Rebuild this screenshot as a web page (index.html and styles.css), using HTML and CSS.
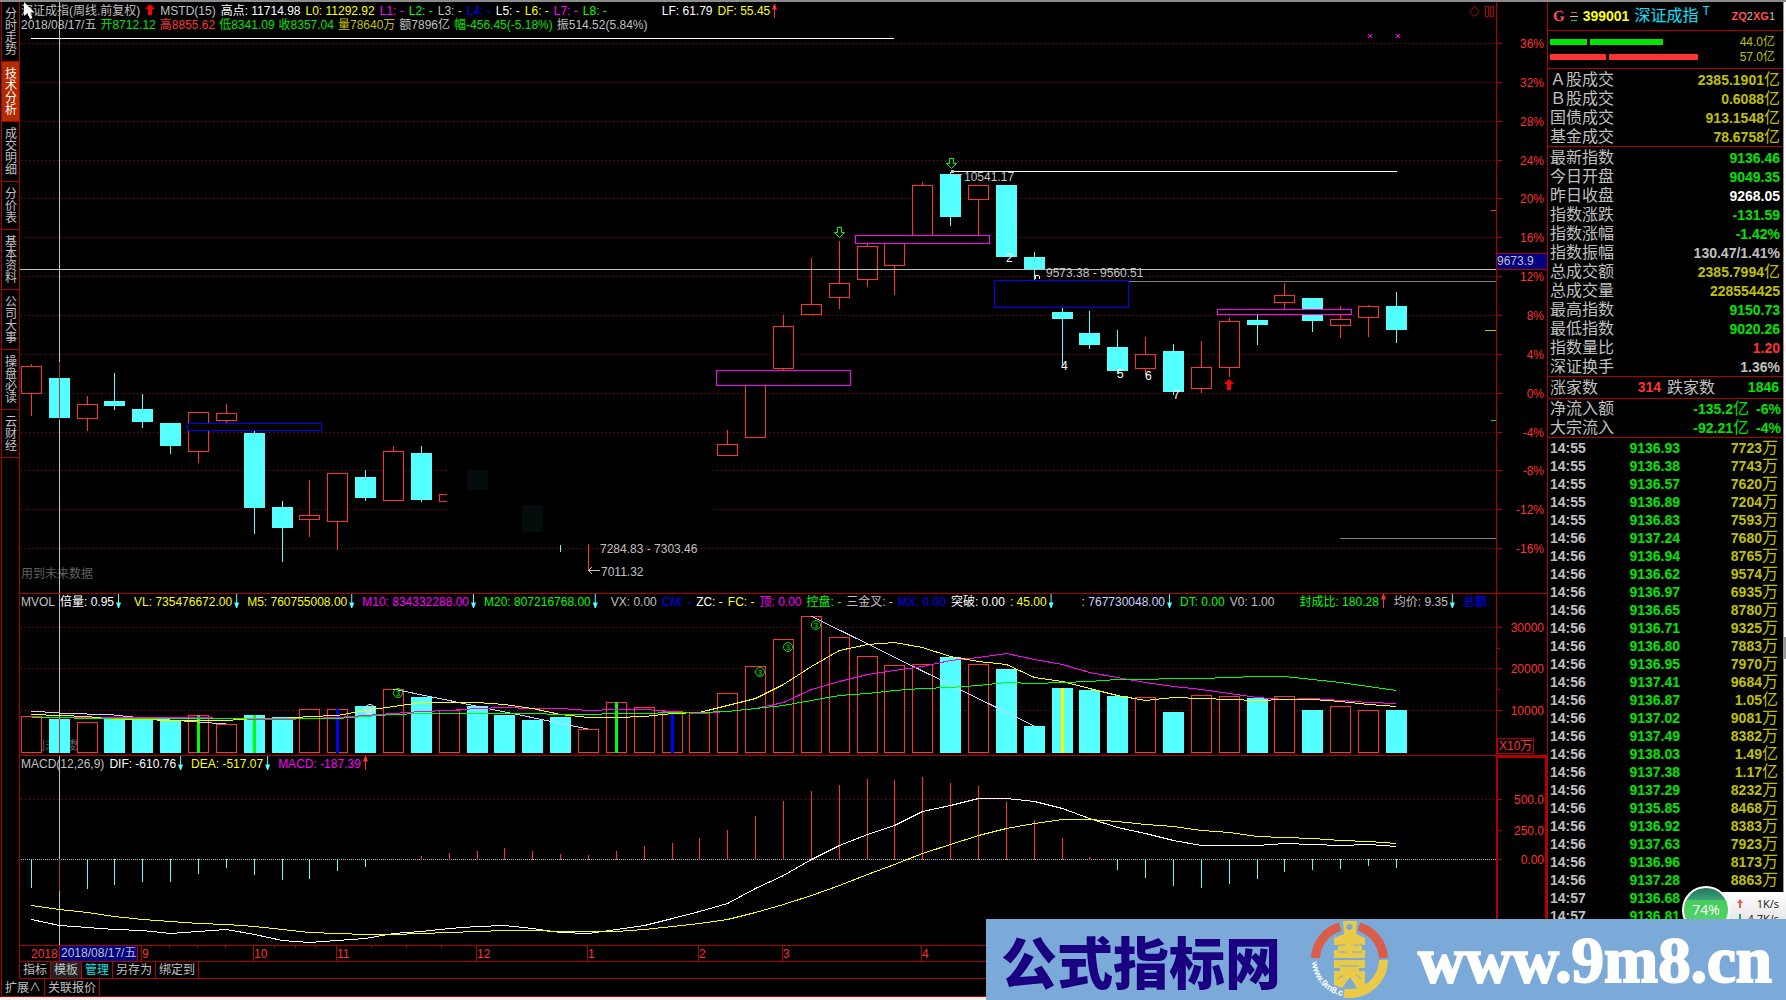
FILE: index.html
```html
<!DOCTYPE html>
<html lang="zh-CN">
<head>
    <meta charset="UTF-8">
    <meta name="viewport" content="width=device-width, initial-scale=1.0">
    <title>深证成指 技术分析</title>
    <link rel="stylesheet" href="styles.css">
</head>
<body>
    <div class="main">
        <div class="left">
            <div class="upper">
                <nav class="sidebar">
                    <button>分时走势</button>
                    <button class="active">技术分析</button>
                    <button>成交明细</button>
                    <button>分价表</button>
                    <button>基本资料</button>
                    <button>公司大事</button>
                    <button>操盘必读</button>
                    <button>云财经</button>
                </nav>
                <div class="charts">
                    <section class="panel price">
                        <div class="plot">
                            <svg id="price_plot"></svg>
                            <div class="legend">
                                <div class="line">
                                    <span class="gray">深证成指(周线.前复权)</span>
                                    <svg class="up-icon" width="10" height="11"><path d="M5 0 L10 5 H7 V11 H3 V5 H0 Z" fill="#f00"/></svg>
                                    <span class="gray">MSTD(15)</span>
                                    <span class="white">高点: 11714.98</span>
                                    <span class="yellow">L0: 11292.92</span>
                                    <span class="magenta">L1: -</span>
                                    <span class="lime">L2: -</span>
                                    <span class="gray">L3: -</span>
                                    <span class="blue">L4: -</span>
                                    <span class="white">L5: -</span>
                                    <span class="yellow">L6: -</span>
                                    <span class="magenta">L7: -</span>
                                    <span class="lime">L8: -</span>
                                    <span class="white far">LF: 61.79</span>
                                    <span class="yellow up">DF: 55.45</span>
                                </div>
                                <div class="line ohlc">
                                    <span class="gray">2018/08/17/五</span>
                                    <span class="green">开8712.12</span>
                                    <span class="red">高8855.62</span>
                                    <span class="green">低8341.09</span>
                                    <span class="green">收8357.04</span>
                                    <span class="gold">量78640万</span>
                                    <span class="gray">额7896亿</span>
                                    <span class="green">幅-456.45(-5.18%)</span>
                                    <span class="gray">振514.52(5.84%)</span>
                                </div>
                            </div>
                        </div>
                        <svg class="axis" id="price_axis"></svg>
                    </section>

                    <section class="panel volume">
                        <div class="plot">
                            <svg id="vol_plot"></svg>
                            <div class="legend">
                                <div class="line">
                                    <span class="gray">MVOL</span>
                                    <span class="white down">倍量: 0.95</span>
                                    <span class="yellow down near">VL: 735476672.00</span>
                                    <span class="yellow down">M5: 760755008.00</span>
                                    <span class="magenta down">M10: 834332288.00</span>
                                    <span class="lime down">M20: 807216768.00</span>
                                    <span class="gray near">VX: 0.00</span>
                                    <span class="blue">CM: -</span>
                                    <span class="white">ZC: -</span>
                                    <span class="yellow">FC: -</span>
                                    <span class="magenta">顶: 0.00</span>
                                    <span class="lime">控盘: -</span>
                                    <span class="gray">三金叉: -</span>
                                    <span class="blue">MX: 0.00</span>
                                    <span class="white">突破: 0.00</span>
                                    <span class="yellow down">: 45.00</span>
                                    <span class="lavender down mid">: 767730048.00</span>
                                    <span class="lime">DT: 0.00</span>
                                    <span class="gray">V0: 1.00</span>
                                    <span class="lime up mid">封成比: 180.28</span>
                                    <span class="gray down">均价: 9.35</span>
                                    <span class="blue">总额:</span>
                                </div>
                            </div>
                        </div>
                        <svg class="axis" id="vol_axis"></svg>
                    </section>

                    <section class="panel macd">
                        <div class="plot">
                            <svg id="macd_plot"></svg>
                            <div class="legend">
                                <div class="line">
                                    <span class="gray">MACD(12,26,9)</span>
                                    <span class="white down">DIF: -610.76</span>
                                    <span class="yellow down">DEA: -517.07</span>
                                    <span class="magenta up">MACD: -187.39</span>
                                </div>
                            </div>
                        </div>
                        <svg class="axis selected" id="macd_axis"></svg>
                    </section>

                    <svg class="dates" id="dates"></svg>

                    <div class="tabs">
                        <button>指标</button>
                        <button class="on">模板</button>
                        <button class="manage">管理</button>
                        <button>另存为</button>
                        <button>绑定到</button>
                    </div>
                </div>
            </div>
            <div class="tabs bottom">
                <button>扩展∧</button>
                <button>关联报价</button>
            </div>
        </div>

        <aside class="quote">
            <header>
                <b class="g">G</b>
                <svg width="8" height="11"><path d="M1 1.5H7" stroke="#ff5050"/><path d="M0 5.5H8" stroke="#c0c0c0"/><path d="M1 9.5H7" stroke="#00e600"/></svg>
                <b class="code">399001</b>
                <span class="name">深证成指<sup>T</sup></span>
                <span class="tag"><b>ZQ</b>2<b>XG</b>1</span>
            </header>
            <div class="bars">
                <div class="bar sell"><i class="a"></i><i class="b"></i><span>44.0亿</span></div>
                <div class="bar buy"><i class="a"></i><i class="b"></i><span>57.0亿</span></div>
            </div>
            <table>
                <tr><th>Ａ股成交</th><td class="gold">2385.1901<i>亿</i></td></tr>
                <tr><th>Ｂ股成交</th><td class="gold">0.6088<i>亿</i></td></tr>
                <tr><th>国债成交</th><td class="gold">913.1548<i>亿</i></td></tr>
                <tr><th>基金成交</th><td class="gold">78.6758<i>亿</i></td></tr>
            </table>
            <table>
                <tr><th>最新指数</th><td class="green">9136.46</td></tr>
                <tr><th>今日开盘</th><td class="green">9049.35</td></tr>
                <tr><th>昨日收盘</th><td class="white">9268.05</td></tr>
                <tr><th>指数涨跌</th><td class="green">-131.59</td></tr>
                <tr><th>指数涨幅</th><td class="green">-1.42%</td></tr>
                <tr><th>指数振幅</th><td class="gray">130.47/1.41%</td></tr>
                <tr><th>总成交额</th><td class="gold">2385.7994<i>亿</i></td></tr>
                <tr><th>总成交量</th><td class="gold">228554425</td></tr>
                <tr><th>最高指数</th><td class="green">9150.73</td></tr>
                <tr><th>最低指数</th><td class="green">9020.26</td></tr>
                <tr><th>指数量比</th><td class="red">1.20</td></tr>
                <tr><th>深证换手</th><td class="gray">1.36%</td></tr>
            </table>
            <div class="count">
                <span>涨家数</span><b class="red">314</b><span>跌家数</span><b class="green">1846</b>
            </div>
            <table class="flow">
                <tr><th>净流入额</th><td class="green">-135.2<i>亿</i></td><td class="green pct">-6%</td></tr>
                <tr><th>大宗流入</th><td class="green">-92.21<i>亿</i></td><td class="green pct">-4%</td></tr>
            </table>
            <div class="ticks">
                <table id="ticks"></table>
            </div>
        </aside>
        <div class="scroll"><div class="thumb"></div></div>
    </div>

    <svg class="cursor" width="13" height="18"><path d="M1 0 V14 L4.500 11 L7 17 L9.500 16 L7 10.500 H11.500 Z" fill="#fff"/></svg>

    <!-- 网速悬浮球 -->
    <div class="speed">
        <div class="ball">74%</div>
        <div class="rates">
            <p><svg width="6" height="9"><path d="M3 0L6 4H4V9H2V4H0Z" fill="#e8604a"/></svg>1K/s</p>
            <p><svg width="6" height="9"><path d="M3 9L6 5H4V0H2V5H0Z" fill="#2ca05a"/></svg>4.7K/s</p>
        </div>
    </div>

    <div class="banner">
        <span class="cn">公式指标网</span>
        <svg width="77" height="77" viewBox="0 0 77 77">
            <path d="M4.500 37 A34 34 0 0 1 29 5.800" fill="none" stroke="#d95d48" stroke-width="9"/>
            <path d="M48 5.800 A34 34 0 0 1 72.500 37" fill="none" stroke="#d95d48" stroke-width="9"/>
            <path d="M72.500 39 A34 34 0 0 1 33 72.100" fill="none" stroke="#e9cb49" stroke-width="9"/>
            <path d="M32 0H46L45 13L54 17V24H51V29H54V37H23V29H27V24H23V17L33 13Z" fill="#e9cb49"/>
            <path d="M23 39H54V47H48V50H54V66L46 67L39 56L31 67L23 64V50H29V47H23Z" fill="#e9cb49"/>
            <path d="M27 24H35M42 24H51M27 31H36M41 31H51M29 45H48M32 54L27 58M45 54L50 58" stroke="#7ba9d8" stroke-width="1"/>
            <circle cx="38.500" cy="6" r="3" fill="#7ba9d8"/>
            <path id="ring" d="M1 41 A37 37 0 0 0 32 75" fill="none"/>
            <text font-size="9" font-weight="bold" fill="#fff"><textPath href="#ring">www.9m8.cn</textPath></text>
        </svg>
        <span class="url">www.9m8.cn</span>
    </div>

    <script src="script.js"></script>
</body>
</html>
```
FILE: styles.css
```css
* {
    box-sizing: border-box;
}

body {
    margin: 0;
    height: 100vh;
    overflow: hidden;
    position: relative;
    background: #f4f0f0;
    border-top: 2px solid #8c8c8c;
    font: 12px/14px "Liberation Sans", "Noto Sans CJK SC", sans-serif;
    color: #c0c0c0;
}

button {
    margin: 0;
    padding: 0;
    border: 0;
    background: none;
    color: inherit;
    font: inherit;
    cursor: pointer;
}

.white { color: #fff; }
.gray { color: #c0c0c0; }
.yellow { color: #ff0; }
.gold { color: #c0c000; }
.magenta { color: #f0f; }
.lime { color: #0f0; }
.green { color: #00e600; }
.red { color: #ff3232; }
.blue { color: #00f; }
.lavender { color: #d0d0ff; }

.main {
    display: flex;
    height: 100%;
}

.left {
    flex: 1;
    min-width: 0;
    padding-left: 1px;
    background: #000;
    display: flex;
    flex-direction: column;
    border-bottom: 3px solid #f4f0f0;
}

.upper {
    flex: 1;
    min-height: 0;
    display: flex;
}

/* 左侧竖排菜单 */
.sidebar {
    width: 19px;
    border-left: 1px solid #b00000;
    border-right: 1px solid #b00000;
}

.sidebar button {
    display: block;
    width: 100%;
    padding: 6px 2px 5px 3px;
    border-bottom: 1px solid #b00000;
    line-height: 12px;
    word-break: break-all;
}

.sidebar button.active {
    background: #b32c00;
    color: #fff;
}

.charts {
    flex: 1;
    min-width: 0;
    display: flex;
    flex-direction: column;
}

.panel {
    display: flex;
    border-bottom: 1px solid #b00000;
}

.price {
    flex: 1;
    min-height: 0;
}

.volume {
    height: 162px;
}

.macd {
    height: 190px;
}

.plot {
    flex: 1;
    min-width: 0;
    display: grid;
    overflow: hidden;
}

.plot > * {
    grid-area: 1 / 1;
    min-width: 0;
}

.plot svg {
    width: 100%;
    height: 100%;
}

.axis {
    width: 51px;
    height: 100%;
    border-left: 1px solid #b00000;
}

.axis.selected {
    border: 2px solid #b00000;
    border-bottom: 0;
}

svg {
    display: block;
    flex: none;
}

svg text {
    font: 12px "Liberation Sans", "Noto Sans CJK SC", sans-serif;
}

.banner svg text {
    font: bold 9px "Liberation Sans", sans-serif;
}

.legend {
    padding: 0 1px;
    z-index: 1;
}

.price .legend {
    padding-top: 2px;
}

.line {
    display: flex;
    gap: 5px;
    white-space: nowrap;
}

.ohlc {
    gap: 4px;
}

.volume .line,
.macd .line {
    line-height: 16px;
}

.legend .up-icon {
    width: 10px;
    height: 11px;
}

.line .near { margin-left: 5px; }
.line .mid { margin-left: 20px; }
.line .far { margin-left: 50px; }

/* 数值后的升降箭头 */
.up::after,
.down::after {
    content: "";
    display: inline-block;
    width: 5px;
    height: 14px;
    margin: 0 3px 0 2px;
    vertical-align: top;
    background: #54ffff;
    clip-path: polygon(40% 0, 60% 0, 60% 60%, 100% 60%, 60% 100%, 40% 100%, 0 60%, 40% 60%);
}

.up::after {
    background: #ff3232;
    transform: rotate(180deg);
}

.dates {
    width: 100%;
    height: 16px;
    border-bottom: 1px solid #b00000;
}

.tabs {
    display: flex;
    height: 17px;
    border-bottom: 1px solid #b00000;
}

.tabs button {
    padding: 0 3px;
    line-height: 16px;
    border-right: 1px solid #b00000;
}

.tabs .on {
    background: #222;
}

.tabs .manage {
    color: #00e6e6;
}

.bottom {
    height: 18px;
    border-left: 1px solid #b00000;
}

/* 右侧行情 */
.quote {
    width: 236px;
    background: #000;
    border-left: 1px solid #b00000;
    display: flex;
    flex-direction: column;
}

.quote > * {
    border-bottom: 1px solid #b00000;
}

.quote header {
    height: 29px;
    padding: 0 8px 0 5px;
    display: flex;
    align-items: center;
    gap: 5px;
}

.quote .g {
    color: #ff5050;
    font: bold 15px "Liberation Serif", serif;
}

.quote .code {
    color: #ff0;
    font-size: 14px;
}

.quote .name {
    color: #00e6ff;
    font-size: 16px;
}

.quote .name sup {
    font-size: 12px;
    line-height: 0;
    margin-left: 4px;
}

.quote .tag {
    margin-left: auto;
    font-size: 11px;
}

.quote .tag b {
    color: #ff5050;
}

.bars {
    height: 38px;
    padding: 3px 8px 0 2px;
}

.bar {
    display: flex;
    align-items: center;
    gap: 3px;
    height: 15px;
    color: #c0c000;
}

.bar i {
    height: 6px;
    background: #00e600;
}

.bar.buy i {
    background: #ff3232;
}

.bar span {
    margin-left: auto;
}

.sell .a { width: 37px; }
.sell .b { width: 73px; }
.buy .a { width: 56px; }
.buy .b { width: 89px; }

table {
    border-collapse: collapse;
}

.quote > table {
    display: block;
    padding: 1px 3px 0 2px;
}

.quote > table tbody {
    display: table;
    width: 100%;
}

th,
td {
    padding: 0;
    height: 19px;
    line-height: 18px;
}

th {
    font-weight: normal;
    font-size: 16px;
    text-align: left;
    white-space: nowrap;
}

td {
    font-size: 14px;
    font-weight: bold;
    text-align: right;
}

td i {
    font-style: normal;
    font-weight: normal;
    font-size: 16px;
    line-height: 1px;
}

.quote > .flow {
    padding: 0 2px;
}

.flow .pct {
    width: 32px;
}

.count {
    display: flex;
    height: 22px;
    padding: 0 4px 0 2px;
    line-height: 21px;
    font-size: 16px;
}

.count b {
    width: 69px;
    padding-right: 6px;
    font-size: 14px;
    text-align: right;
}

.count b:last-child {
    flex: 1;
    padding: 0;
}

.quote > .ticks {
    flex: 1;
    min-height: 0;
    overflow: hidden;
    padding: 1px 5px 0 2px;
    border-bottom: 0;
}

.ticks table {
    width: 100%;
    table-layout: fixed;
}

.ticks td {
    height: 18px;
    line-height: 18px;
}

.ticks td:first-child {
    width: 61px;
    text-align: left;
    color: #c0c0c0;
}

.ticks td:nth-child(2) {
    width: 69px;
}

.scroll {
    width: 3px;
    background: #fff;
    border-left: 1px solid #999;
}

.thumb {
    height: 22px;
    margin-top: 635px;
    background: #999;
}

.cursor {
    position: absolute;
    left: 23px;
    top: 0;
    z-index: 3;
}

/* 悬浮球 */
.speed {
    position: absolute;
    right: 0;
    bottom: 66px;
    width: 104px;
    height: 48px;
    display: flex;
    align-items: center;
}

.ball {
    width: 48px;
    height: 48px;
    border: 2px solid #fff;
    border-radius: 50%;
    background: linear-gradient(#1c7a56 0, #3f9c7c 26%, #44cc58 27%, #5ad873 100%);
    color: #fff;
    font: 14px/44px "Open Sans", sans-serif;
    text-align: center;
    z-index: 1;
}

.rates {
    flex: 1;
    margin-left: -24px;
    height: 36px;
    padding: 4px 7px 0 31px;
    background: linear-gradient(#fff, #e0e0e0);
    color: #111;
    font: 11px/15px "Open Sans", sans-serif;
}

.rates p {
    margin: 0;
    display: flex;
    align-items: center;
    justify-content: space-between;
}

.banner {
    position: absolute;
    right: 0;
    bottom: 0;
    z-index: 2;
    width: 800px;
    height: 81px;
    padding: 0 14px 0 15px;
    display: flex;
    align-items: center;
    justify-content: space-between;
    background: #7ba9d8;
    white-space: nowrap;
}

.banner .cn {
    color: #1a0080;
    font: 900 56px/80px "Noto Sans CJK SC", sans-serif;
}

.banner .url {
    color: #fff;
    font: bold 65px/70px "Liberation Serif", serif;
    -webkit-text-stroke: 2px #fff;
}
```
FILE: script.js
```js
var NS = "http://www.w3.org/2000/svg";
var RED = "#ff3232", CYAN = "#54ffff", DARK = "#b00000";

// 每个图的原点，坐标统一按窗口计算
function layer(id, ox, oy) {
    var g = document.createElementNS(NS, "g");
    g.setAttribute("transform", "translate(" + -ox + "," + -oy + ")");
    document.getElementById(id).appendChild(g);
    return g;
}

function add(g, tag, attrs) {
    var el = document.createElementNS(NS, tag);
    for (var k in attrs) el.setAttribute(k, attrs[k]);
    g.appendChild(el);
    return el;
}

function fill(g, x1, y1, x2, y2, color) {
    add(g, "rect", { x: x1, y: y1, width: x2 - x1, height: y2 - y1, fill: color, "shape-rendering": "crispEdges" });
}

function box(g, x1, y1, x2, y2, color) {
    add(g, "rect", { x: x1 + 0.5, y: y1 + 0.5, width: x2 - x1 - 1, height: y2 - y1 - 1, fill: "#000", stroke: color });
}

function text(g, x, y, s, color, anchor) {
    add(g, "text", { x: x, y: y, fill: color, "text-anchor": anchor || "start" }).textContent = s;
}

function dots(g, y, color, step) {
    add(g, "line", { x1: 21, y1: y + 0.5, x2: "110%", y2: y + 0.5, stroke: color, "stroke-dasharray": "1 " + (step - 1), "shape-rendering": "crispEdges" });
}

function cx(i) {
    return Math.floor(31.3 + 27.857 * i);
}

function curve(g, ys, color) {
    var pts = ys.map(function (y, i) { return (cx(i) + 0.5) + "," + (y + 0.5); });
    add(g, "polyline", { points: pts.join(" "), fill: "none", stroke: color, "shape-rendering": "crispEdges" });
}

function seg(g, pts, color) {
    add(g, "polyline", { points: pts, fill: "none", stroke: color, "shape-rendering": "crispEdges" });
}

// K线: [序号, 涨(1)/跌(0), 最高, 实体上, 实体下, 最低]
var candles = [
    [0,1,364,366,394,416],[1,0,378,378,418,418],[2,1,396,404,419,431],[3,0,373,401,406,410],
    [4,0,394,409,422,428],[5,0,423,423,446,454],[6,1,412,412,452,463],[7,1,404,413,421,423],
    [8,0,431,433,508,534],[9,0,501,507,528,562],[10,1,480,515,520,537],[11,1,473,473,522,550],
    [12,0,470,477,498,501],[13,1,446,451,501,501],[14,0,446,453,500,502],
    [25,1,430,444,456,456],[26,1,385,384,438,438],[27,1,315,326,369,370],[28,1,258,304,315,315],
    [29,1,241,283,298,309],[30,1,243,246,280,287],[31,1,243,243,266,295],[32,1,182,185,236,236],
    [33,0,172,174,217,226],[34,1,185,185,200,236],[35,0,185,185,257,257],[36,0,252,257,269,280],
    [37,0,308,312,319,366],[38,0,311,333,345,349],[39,0,330,347,371,374],[40,1,337,354,369,375],
    [41,0,344,351,392,395],[42,1,341,367,389,393],[43,1,318,321,368,377],[44,0,315,320,325,345],
    [45,1,283,295,303,309],[46,0,298,298,321,332],[47,1,306,319,326,338],[48,1,305,306,318,337],
    [49,0,292,306,330,343]
];

var g = layer("price_plot", 20, 2);
var a = layer("price_axis", 1497, 2);
for (var n = 0; n < 14; n++) {
    var gy = Math.round(43 + n * 38.85);
    dots(g, gy, DARK, 4);
    fill(a, 1497, gy, 1502, gy + 1, DARK);
    text(a, 1544, gy + 5, (36 - n * 4) + "%", RED, "end");
}
fill(a, 1497, 253, 1548, 270, DARK);
fill(a, 1497, 254, 1548, 269, "#000080");
text(a, 1497, 265, "9673.9", "#c0c0c0");

text(g, 21, 578, "用到未来数据", "#606060");
fill(g, 31, 38, 894, 39, "#fff");
fill(g, 951, 171, 1397, 172, "#fff");
fill(g, 1129, 281, 1496, 282, "#808080");
fill(g, 1340, 538, 1496, 539, "#808080");

// 遮住的区间
fill(g, 447, 440, 712, 544, "#000");
fill(g, 467, 470, 488, 490, "#040c0c");
fill(g, 522, 505, 543, 532, "#040c0c");

candles.forEach(function (c) {
    var x = cx(c[0]), color = c[1] ? RED : CYAN;
    fill(g, x, c[2], x + 1, c[5], color);
    if (c[1]) box(g, x - 10, c[3], x + 11, c[4], color);
    else fill(g, x - 10, c[3], x + 11, c[4], color);
});
seg(g, "447,494.5 439.5,494.5 439.5,501.5 447,501.5", RED);
fill(g, 560, 545, 561, 552, CYAN);
fill(g, 588, 544, 589, 570, RED);

box(g, 187, 423, 322, 431, "#00f");
box(g, 716, 370, 851, 386, "#f0f");
box(g, 855, 235, 990, 244, "#f0f");
box(g, 994, 280, 1129, 308, "#00f");
box(g, 1217, 309, 1352, 315, "#f0f");

// 买卖点箭头
[[839, 227], [951, 158]].forEach(function (p) {
    add(g, "path", { d: "M" + (p[0] - 1.5) + " " + (p[1] + 0.5) + "h4v5h3l-5 5l-5 -5h3z", fill: "#000", stroke: "#0f0" });
});
add(g, "path", { d: "M1229 379l5 5h-3v6h-4v-6h-3z", fill: "#f00" });

fill(g, 20, 269, 1496, 270, "#c0c0c0");
fill(g, 59, 2, 60, 594, "#c0c0c0");
fill(g, 59, 362, 60, 420, "#a04040");

[["2", 1006, 262], ["4", 1061, 370], ["5", 1117, 378], ["6", 1145, 380], ["7", 1173, 399]].forEach(function (t) {
    text(g, t[1], t[2], t[0], "#fff");
});
seg(g, "1035,275.5 1039,275.5 1039.5,279", "#fff");
seg(g, "1035.5,279 1035.5,276", "#fff");
fill(g, 951, 170, 954, 173, "#c0c0c0");
fill(g, 952, 174, 962, 175, "#c0c0c0");
text(g, 964, 181, "10541.17", "#c0c0c0");
text(g, 1046, 277, "9573.38 - 9560.51", "#c0c0c0");
text(g, 600, 553, "7284.83 - 7303.46", "#c0c0c0");
seg(g, "600,570.5 588,570.5", "#c0c0c0");
seg(g, "592,567 588.5,570.5 592,574", "#c0c0c0");
text(g, 601, 576, "7011.32", "#c0c0c0");
fill(g, 1491, 210, 1496, 211, RED);
fill(g, 1485, 330, 1496, 331, "#c0c000");
fill(g, 1491, 420, 1496, 421, "#00e600");

[1370, 1398].forEach(function (x) {
    add(g, "path", { d: "M" + (x - 2) + " 34l4 4m0 -4l-4 4", stroke: "#f0f" });
});
add(g, "path", { d: "M1474.5 6.500l5 5l-5 5l-5 -5z", fill: "none", stroke: DARK });
box(g, 1485, 6, 1489, 17, DARK);
box(g, 1490, 6, 1494, 17, DARK);

// 成交量
g = layer("vol_plot", 20, 594);
a = layer("vol_axis", 1497, 594);
[[627, "30000"], [668, "20000"], [710, "10000"]].forEach(function (r) {
    dots(g, r[0], DARK, 4);
    fill(a, 1497, r[0], 1502, r[0] + 1, DARK);
    text(a, 1544, r[0] + 5, r[1], RED, "end");
});
fill(a, 1497, 648, 1500, 649, DARK);
fill(a, 1497, 689, 1500, 690, DARK);
box(a, 1497, 738, 1534, 754, DARK);
text(a, 1499, 750, "X10万", RED);

text(g, 21, 750, "用到未来数据", "#606060");
var vols = [716,719,722,719,719,720,715,724,715,717,709,709,706,689,697,710,706,715,720,717,729,702,707,711,713,
    693,666,639,616,637,656,665,664,657,664,669,726,688,690,696,697,712,695,696,698,696,710,706,710,710];
var falls = [1,3,4,5,8,9,12,14,16,17,18,19,33,35,36,37,38,39,41,44,46,49];
var stripes = { 6: "#0f0", 8: "#0f0", 21: "#0f0", 11: "#00f", 23: "#00f", 37: "#ff0" };
vols.forEach(function (y, i) {
    var x = cx(i);
    if (falls.indexOf(i) >= 0) fill(g, x - 10, y, x + 11, 753, CYAN);
    else box(g, x - 10, y, x + 11, 753, RED);
    if (stripes[i]) fill(g, x - 1, y, x + 2, 753, stripes[i]);
});
fill(g, 59, 594, 60, 719, "#c0c0c0");
fill(g, 59, 719, 60, 753, "#a04040");

seg(g, "31,711 59,713 114,715 142,718 170,720 198,722 226,724", "#d0d0ff");
seg(g, "393,689 588,729", "#d0d0ff");
seg(g, "811,616 1034,726", "#d0d0ff");
curve(g, [717,717,717,717,717,717,717,718,719,719,718,717,715,713,711,710,708,707,708,708,710,709,709,711,713,
    711,708,702,689,681,674,670,666,660,657,653,659,664,672,677,682,686,689,693,697,699,698,700,702,703], "#f0f");
curve(g, [714,715,716,719,719,720,720,720,718,718,716,715,710,706,702,702,702,704,708,714,717,717,716,713,712,
    705,698,684,666,650,644,642,647,656,661,664,677,681,688,695,700,697,698,699,700,699,699,701,704,706], "#ff0");
curve(g, [717,717,718,718,718,718,718,718,718,718,718,718,716,714,713,713,713,713,713,714,714,713,713,712,712,
    711,708,705,700,695,693,690,688,687,685,682,683,682,681,679,679,678,678,677,676,676,679,682,686,690], "#0f0");
[[398, 693, "3"], [760, 672, "3"], [788, 647, "3"], [816, 625, "3"], [370, 709, "1"]].forEach(function (m) {
    var color = m[2] == "3" ? "#00e600" : "#fff";
    add(g, "circle", { cx: m[0], cy: m[1], r: 4.5, fill: "none", stroke: color });
    add(g, "text", { x: m[0], y: m[1] + 3, fill: color, "text-anchor": "middle", style: "font-size:8px" }).textContent = m[2];
});

// MACD
g = layer("macd_plot", 20, 756);
a = layer("macd_axis", 1498, 758);
dots(g, 799, DARK, 4);
dots(g, 859, "#c0c0c0", 2);
[[799, "500.0"], [830, "250.0"], [859, "0.00"]].forEach(function (r) {
    fill(a, 1497, r[0], 1502, r[0] + 1, DARK);
    text(a, 1544, r[0] + 5, r[1], RED, "end");
});
[888,891,889,885,882,882,874,868,875,880,879,871,867,860,856,853,851,848,851,854,855,851,846,843,838,
    830,816,801,791,785,779,780,777,783,786,802,820,838,857,870,878,886,888,884,879,872,870,869,866,868].forEach(function (y, i) {
    var x = cx(i);
    if (y > 859) fill(g, x, 859, x + 1, y, CYAN);
    else fill(g, x, y, x + 1, 860, RED);
});
fill(g, 59, 756, 60, 946, "#c0c0c0");
fill(g, 59, 859, 60, 891, "#a04040");
curve(g, [919,925,927,929,930,933,931,929,934,940,942,940,938,933,931,928,926,925,928,932,933,929,925,918,911,
    903,888,875,859,845,834,825,811,805,798,798,801,808,818,827,833,840,845,845,845,843,844,845,844,846], "#fff");
curve(g, [905,909,912,916,919,921,923,924,926,929,932,933,934,934,933,932,931,930,930,931,931,931,929,926,923,
    919,912,904,895,885,874,864,853,844,835,828,823,819,819,821,824,826,830,832,836,837,838,840,841,843], "#ff0");

// 时间轴
g = layer("dates", 20, 946);
text(g, 31, 958, "2018", RED);
[[142, "9"], [254, "10"], [337, "11"], [477, "12"], [588, "1"], [699, "2"], [783, "3"], [922, "4"]].forEach(function (m) {
    fill(g, m[0] - 1, 946, m[0], 962, DARK);
    text(g, m[0], 958, m[1], RED);
});
[169, 197, 225, 274, 295, 315, 371, 406, 441].forEach(function (x) {
    fill(g, x, 946, x + 1, 948, DARK);
});
fill(g, 59, 946, 138, 961, DARK);
fill(g, 60, 946, 137, 961, "#000080");
text(g, 61, 957, "2018/08/17/五", "#c0c0c0");

// 分时成交
var ticks = [
    ["14:55", "9136.93", "7723万"], ["14:55", "9136.38", "7743万"], ["14:55", "9136.57", "7620万"],
    ["14:55", "9136.89", "7204万"], ["14:55", "9136.83", "7593万"], ["14:56", "9137.24", "7680万"],
    ["14:56", "9136.94", "8765万"], ["14:56", "9136.62", "9574万"], ["14:56", "9136.97", "6935万"],
    ["14:56", "9136.65", "8780万"], ["14:56", "9136.71", "9325万"], ["14:56", "9136.80", "7883万"],
    ["14:56", "9136.95", "7970万"], ["14:56", "9137.41", "9684万"], ["14:56", "9136.87", "1.05亿"],
    ["14:56", "9137.02", "9081万"], ["14:56", "9137.49", "8382万"], ["14:56", "9138.03", "1.49亿"],
    ["14:56", "9137.38", "1.17亿"], ["14:56", "9137.29", "8232万"], ["14:56", "9135.85", "8468万"],
    ["14:56", "9136.92", "8383万"], ["14:56", "9137.63", "7923万"], ["14:56", "9136.96", "8173万"],
    ["14:56", "9137.28", "8863万"], ["14:57", "9136.68", ""], ["14:57", "9136.81", ""]
];
document.getElementById("ticks").innerHTML = ticks.map(function (t) {
    return "<tr><td>" + t[0] + "</td><td class=\"green\">" + t[1] + "</td><td class=\"gold\">" +
        t[2].slice(0, -1) + "<i>" + t[2].slice(-1) + "</i></td></tr>";
}).join("");
```
